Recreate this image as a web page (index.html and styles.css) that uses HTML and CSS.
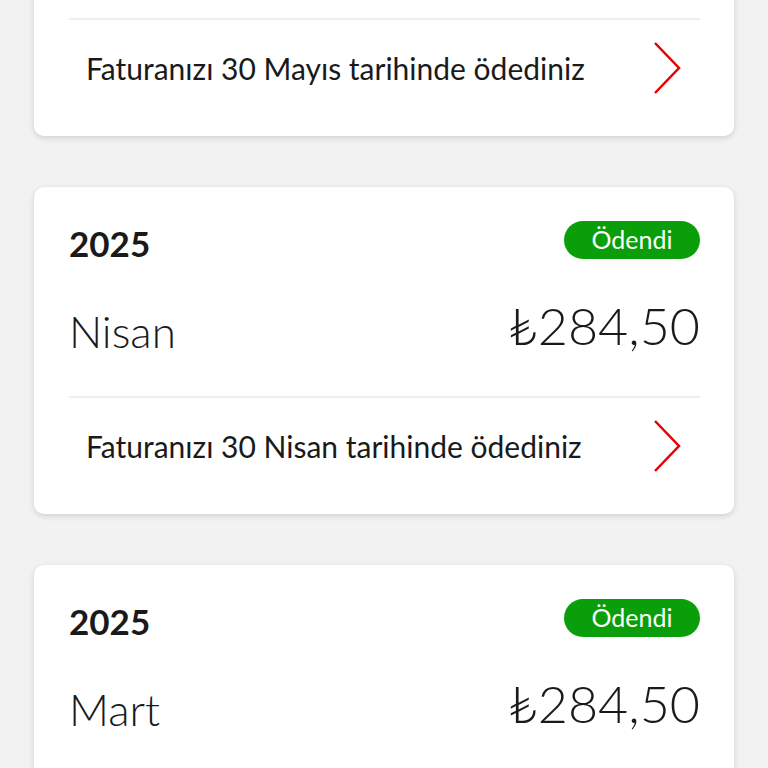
FILE: index.html
```html
<!DOCTYPE html>
<html lang="tr">
<head>
    <meta charset="UTF-8">
    <meta name="viewport" content="width=device-width, initial-scale=1.0">
    <title>Faturalarım</title>
    <link rel="stylesheet" href="styles.css">
</head>
<body>

    <div class="bill-list">

        <div class="bill-card">
            <div class="bill-head">
                <span class="bill-year">2025</span>
                <span class="badge">Ödendi</span>
            </div>
            <div class="bill-main">
                <span class="bill-month">Mayıs</span>
                <span class="bill-amount">₺284,50</span>
            </div>
            <div class="bill-foot">
                <span>Faturanızı 30 Mayıs tarihinde ödediniz</span>
                <svg class="chevron" width="28" height="52" viewBox="0 0 28 52"><polyline points="2,1 26,26 2,51" /></svg>
            </div>
        </div>

        <div class="bill-card">
            <div class="bill-head">
                <span class="bill-year">2025</span>
                <span class="badge">Ödendi</span>
            </div>
            <div class="bill-main">
                <span class="bill-month">Nisan</span>
                <span class="bill-amount">₺284,50</span>
            </div>
            <div class="bill-foot">
                <span>Faturanızı 30 Nisan tarihinde ödediniz</span>
                <svg class="chevron" width="28" height="52" viewBox="0 0 28 52"><polyline points="2,1 26,26 2,51" /></svg>
            </div>
        </div>

        <div class="bill-card">
            <div class="bill-head">
                <span class="bill-year">2025</span>
                <span class="badge">Ödendi</span>
            </div>
            <div class="bill-main">
                <span class="bill-month">Mart</span>
                <span class="bill-amount">₺284,50</span>
            </div>
            <div class="bill-foot">
                <span>Faturanızı 30 Mart tarihinde ödediniz</span>
                <svg class="chevron" width="28" height="52" viewBox="0 0 28 52"><polyline points="2,1 26,26 2,51" /></svg>
            </div>
        </div>

    </div>

</body>
</html>
```

FILE: styles.css
```css
body {
    margin: 0;
    background-color: #f2f2f2;
    font-family: Lato, "Open Sans", sans-serif;
    color: #1a1a1a;
    overflow: hidden;
}
.bill-list {
    /* page is scrolled: first card is cut off at the top */
    margin-top: -191px;
    padding: 0 34px;
    display: flex;
    flex-direction: column;
    gap: 51px;
}
.bill-card {
    background: white;
    border-radius: 10px;
    box-shadow: 0 2px 6px rgba(0, 0, 0, 0.14);
    padding: 34px 34px 20px 35px;
}
.bill-head {
    display: flex;
    justify-content: space-between;
    align-items: center;
    height: 38px;
}
.bill-year {
    font-size: 35px;
    font-weight: 700;
    line-height: 38px;
    padding-top: 6px;
}
.badge {
    background-color: #0a9e0a;
    color: white;
    font-size: 25px;
    width: 136px;
    height: 38px;
    line-height: 37px;
    border-radius: 19px;
    text-align: center;
}
.bill-main {
    display: flex;
    justify-content: space-between;
    align-items: flex-end;
    height: 64px;
    margin: 28px 0 45px;
    font-weight: 300;
    line-height: 1;
}
.bill-month {
    font-size: 44px;
    margin-bottom: -2px;
}
.bill-amount {
    font-size: 52px;
}
.bill-foot {
    border-top: 2px solid #eeeeee;
    height: 96px;
    display: flex;
    justify-content: space-between;
    align-items: center;
    padding: 0 19px 0 17px;
    font-size: 30px;
}
.chevron {
    fill: none;
    stroke: #e60000;
    stroke-width: 2.5;
}
```
